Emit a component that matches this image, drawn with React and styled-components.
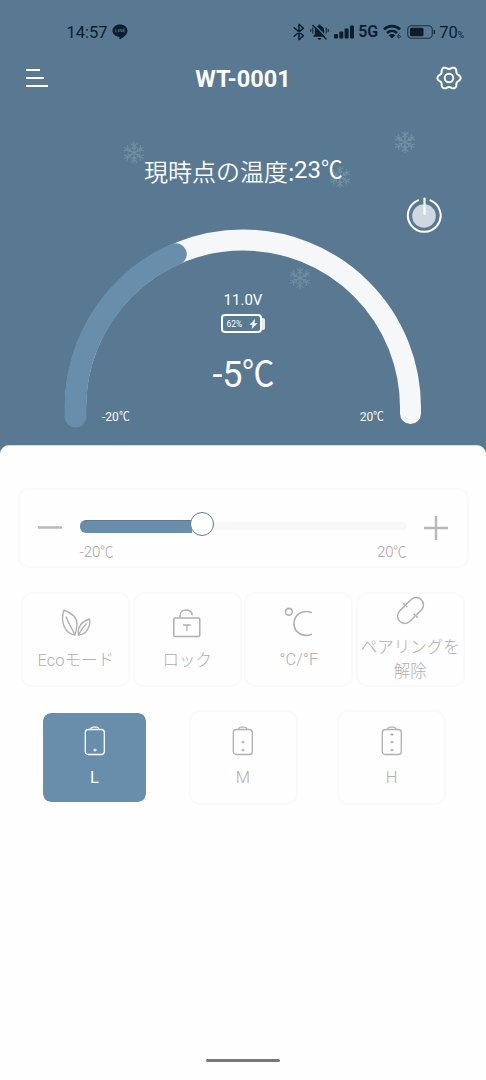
import React from "react";
import styled, { createGlobalStyle } from "styled-components";

const GlobalStyle = createGlobalStyle`
  * { box-sizing: border-box; }
  body {
    margin: 0;
    background: #fefefe;
    font-family: Roboto, "Noto Sans CJK JP", sans-serif;
  }
`;

const Screen = styled.main`
  width: 486px;
  height: 1080px;
  display: flex;
  flex-direction: column;
  overflow: hidden;
  background: #587991;
`;

const Hero = styled.section`
  position: relative;
  height: 445px;
  flex: none;
  display: flex;
  flex-direction: column;
  color: #fbfdff;
`;

const StatusBar = styled.div`
  height: 56px;
  padding: 8px 22px 0 66.5px;
  display: flex;
  align-items: center;
  justify-content: space-between;
  color: #0d1d2a;
`;

const StatusGroup = styled.div`
  display: flex;
  align-items: center;
  gap: ${(p) => p.$gap || 4}px;
  font-size: 16.5px;
  line-height: 20px;

  svg { display: block; }
`;

const Clock = styled.span`
  padding-top: 1px;
`;

const Network = styled.span`
  font-size: 16px;
  font-weight: 600;
  margin: 0 0 0 -1px;
`;

const Percent = styled.span`
  display: flex;
  align-items: baseline;
  padding-top: 3px;
  margin-left: -2px;
  small { font-size: 8.5px; }
`;

const TitleBar = styled.header`
  height: 44px;
  padding: 0 23px 0 25px;
  display: grid;
  grid-template-columns: 28px 1fr 28px;
  align-items: center;

  svg { display: block; }
`;

const Title = styled.h1`
  margin: 1px 2px 0 0;
  text-align: center;
  font-size: 23.5px;
  font-weight: 700;
  line-height: 28px;
`;

const Current = styled.div`
  height: 99px;
  padding: 54px 0 0 144px;
  display: flex;
  font-size: 24px;
  line-height: 34px;
  white-space: nowrap;
`;

const CurrentLabel = styled.span`
  font-family: "Noto Sans CJK JP", sans-serif;
  width: 150px;
  font-weight: 350;
`;

const CurrentValue = styled.span`
  margin-top: -1px;
`;

/* Condensed degree sign that sits tight against the digits. */
const Unit = styled.span`
  display: inline-block;
  transform: scaleX(0.9);
  transform-origin: left;
  margin-right: -0.09em;
  margin-left: -0.02em;
`;

const Flake = styled.svg`
  position: absolute;
  left: ${(p) => p.$x}px;
  top: ${(p) => p.$y}px;
  width: 24px;
  height: 24px;
  opacity: ${(p) => p.$fade};
`;

const PowerButton = styled.button`
  position: absolute;
  left: 405px;
  top: 196px;
  width: 38px;
  height: 40px;
  border: 0;
  padding: 0;
  background: none;
`;

const Gauge = styled.div`
  margin-top: 20px;
  height: 220px;
  display: grid;

  > * { grid-area: 1 / 1; }
`;

const Reading = styled.div`
  display: flex;
  flex-direction: column;
  align-items: center;
  padding-top: 71px;
`;

const Voltage = styled.div`
  font-size: 15px;
  line-height: 20px;
`;

const Battery = styled.div`
  display: flex;
  align-items: center;
  margin-top: 4px;
  margin-right: 1px;
`;

const BatteryBody = styled.div`
  width: 41px;
  height: 19px;
  border: 2px solid #fbfdff;
  border-radius: 4px;
  display: flex;
  align-items: center;
  justify-content: space-between;
  padding: 0 2px 0 4px;
  font-size: 8.5px;
  line-height: 12px;
`;

const BatteryCap = styled.div`
  width: 3px;
  height: 12px;
  background: #e4ecf2;
  border-radius: 0 2px 2px 0;
`;

const Target = styled.div`
  margin-top: 20px;
  padding-left: 1px;
  font-size: 36px;
  line-height: 44px;
`;

const GaugeEnds = styled.div`
  align-self: end;
  display: flex;
  justify-content: space-between;
  padding: 0 102px 14px 102px;
  font-size: 12px;
  line-height: 16px;
`;

const Sheet = styled.section`
  flex: 1;
  display: flex;
  flex-direction: column;
  align-items: center;
  background: #fefefe;
  border-top: 1px solid #d3dce3;
  border-radius: 9px 9px 0 0;
  color: #b7b7b7;
`;

const SliderCard = styled.div`
  margin-top: 42px;
  width: 451px;
  height: 80px;
  border: 2.5px solid #fafafa;
  border-radius: 10px;
  padding: 0 17px 0 17px;
  display: grid;
  grid-template-columns: 26px 328px 26px;
  justify-content: space-between;
`;

const StepButton = styled.button`
  border: 0;
  padding: 0;
  height: 26px;
  margin-top: 23.5px;
  background: none;

  svg { display: block; }
`;

const SliderColumn = styled.div`
  padding: 22px 0 0 0.5px;
`;

const Slider = styled.div`
  height: 24px;
  display: flex;
  align-items: center;
`;

const Filled = styled.div`
  width: 112px;
  height: 13px;
  margin: 5px 0 0 0;
  background: #688eac;
  border-top: 1px solid #5b7b94;
  border-radius: 6px 0 0 6px;
`;

const Thumb = styled.div`
  width: 24px;
  height: 24px;
  margin: 0 -1px 0 -1.5px;
  border: 1px solid #5b7b94;
  border-radius: 50%;
  background: #fff;
  z-index: 1;
`;

const Remaining = styled.div`
  flex: 1;
  height: 8px;
  margin-top: 3px;
  background: #f7f7f7;
  border-radius: 0 4px 4px 0;
`;

const Range = styled.div`
  margin-top: 6px;
  display: flex;
  justify-content: space-between;
  font-size: 15px;
  font-weight: 300;
  line-height: 20px;
  color: #a5a5a5;
`;

const CardRow = styled.div`
  display: flex;
  gap: ${(p) => p.$gap}px;
  margin-top: ${(p) => p.$top}px;
`;

const Card = styled.button`
  width: 109px;
  height: 95px;
  border: ${(p) => (p.$active ? "3px solid #fefefe" : "2.5px solid #fafafa")};
  border-radius: 11px;
  padding: ${(p) => p.$pad}px 0 0;
  display: flex;
  flex-direction: column;
  align-items: center;
  background: ${(p) => (p.$active ? "#688eac" : "#fefefe")};
  background-clip: padding-box;
  color: ${(p) => (p.$active ? "#fbfdff" : "#b0b0b0")};
  font-family: inherit;
  font-size: 16.5px;
  font-weight: ${(p) => (p.$active ? 400 : 300)};
  line-height: 24px;
  text-align: center;

  svg { display: block; flex: none; }
`;

const CardLabel = styled.span`
  margin-top: ${(p) => p.$top}px;
  white-space: nowrap;
`;

const HomeBar = styled.div`
  width: 74px;
  height: 3px;
  margin: auto 0 18px;
  border-radius: 2px;
  background: #777;
`;

const flakes = [
  { x: 122, y: 141, fade: 0.16 },
  { x: 393, y: 130, fade: 0.18 },
  { x: 328, y: 165, fade: 0.16 },
  { x: 288, y: 266, fade: 0.15 },
];

function Snowflake({ x, y, fade }) {
  return (
    <Flake $x={x} $y={y} $fade={fade} viewBox="-12 -12 24 24" fill="none" stroke="#fff" strokeWidth="1.1">
      {[0, 60, 120, 180, 240, 300].map((a) => (
        <path key={a} transform={`rotate(${a})`} d="M0 0V-11M-3.3-9.6 0-6.6 3.3-9.6M-2.4-6 0-3.8 2.4-6" />
      ))}
    </Flake>
  );
}

const line = { fill: "none", stroke: "currentColor", strokeLinecap: "round", strokeLinejoin: "round" };

const ChatIcon = () => (
  <svg width="16" height="16" viewBox="0 0 16 16">
    <path d="M8 .5C3.800.5.5 3.200.5 6.700c0 3.100 2.700 5.600 6.300 6.100.7.100.8.600.6 1.700-.1.700.3.900 1 .5 3.400-1.900 7.100-4.700 7.100-8.300C15.500 3.200 12.200.5 8 .5Z" fill="currentColor" />
    <path d="M3.700 5v3h1.600M6.500 5v3M8 8V5l2 3V5M12.800 5h-1.500v3h1.500M11.300 6.500h1.400" fill="none" stroke="#587991" strokeWidth=".7" />
  </svg>
);

const BluetoothIcon = () => (
  <svg width="12" height="18" viewBox="0 0 12 18" {...line} strokeWidth="1.500">
    <path d="m1.200 4.800 9.200 8L6 16.800V1.200l4.400 4-9.200 8" />
  </svg>
);

const MutedIcon = () => (
  <svg width="19" height="18" viewBox="0 0 19 18">
    <path d="M9.500 1.500c.8 0 1.200.5 1.200 1.200 2.200.6 3.400 2.300 3.400 4.600v3.900l1.700 2v.6H3.200v-.6l1.700-2V7.300c0-2.300 1.200-4 3.400-4.600 0-.7.4-1.200 1.200-1.200ZM7.600 15h3.800c-.2 1.200-.9 1.800-1.900 1.800S7.800 16.200 7.600 15Z" fill="currentColor" />
    <path d="M2.800 4.500v6M.8 6v3M16.200 4.500v6M18.200 6v3" stroke="currentColor" />
    <path d="m4 1.200 14 14.500" stroke="#587991" strokeWidth="1.300" />
    <path d="m2.500 2 14 14.500" stroke="currentColor" strokeWidth="1.300" />
  </svg>
);

const SignalIcon = () => (
  <svg width="20" height="14" viewBox="0 0 20 14" fill="currentColor">
    <rect x="0" y="9" width="4" height="4.500" rx="1" />
    <rect x="5.300" y="6.500" width="4" height="7" rx="1" />
    <rect x="10.600" y="3.500" width="4" height="10" rx="1" />
    <rect x="16" y=".5" width="4" height="13" rx="1" />
  </svg>
);

const WifiIcon = () => (
  <svg width="19" height="16" viewBox="0 0 19 16">
    <g fill="none" stroke="currentColor" strokeWidth="2.700">
      <path d="M1 5.400c4.400-4.400 11.600-4.400 16 0" />
      <path d="M4 9c2.900-2.700 7.100-2.700 10 0" />
    </g>
    <path d="M5.800 11.200c1.900-1.700 4.500-1.700 6.400 0L9 14.500Z" fill="currentColor" />
    <path d="M16.500 9.500c-2 1.500-2.300 4.500-.5 4.500 1.900 0 1.900-2.500.2-2.500-.8 0-1.300.6-1.300 1.200" fill="none" stroke="currentColor" strokeWidth=".8" />
  </svg>
);

const PhoneBattery = () => (
  <svg width="29" height="14" viewBox="0 0 29 14">
    <rect x=".7" y=".7" width="24.600" height="12.600" rx="4" fill="none" stroke="currentColor" strokeWidth="1.100" opacity=".8" />
    <rect x="3" y="2.800" width="13.500" height="8.400" rx="1.500" fill="currentColor" />
    <path d="M27.300 5v4" stroke="currentColor" strokeWidth="1.200" />
  </svg>
);

const MenuIcon = () => (
  <svg width="24" height="20" viewBox="0 0 24 20" fill="none" stroke="#fff" strokeWidth="2">
    <path d="M1 2h14M1 10h18M1 18h22" />
  </svg>
);

/* Six-lobed gear outline, traced in polar coordinates around (14, 13). */
const gearOutline =
  "M" +
  Array.from({ length: 90 }, (_, i) => {
    const t = (i / 90) * Math.PI * 2;
    const r = 10.3 + 1.3 * Math.cos(6 * t);
    return `${(14 + r * Math.cos(t)).toFixed(2)} ${(13 + r * Math.sin(t)).toFixed(2)}`;
  }).join("L") +
  "Z";

const GearIcon = () => (
  <svg width="28" height="26" viewBox="0 0 28 26" {...line} strokeWidth="2">
    <path d={gearOutline} />
    <circle cx="14" cy="13" r="4.300" />
  </svg>
);

const PowerIcon = () => (
  <svg width="38" height="40" viewBox="0 0 38 40" fill="none">
    <circle cx="19" cy="20" r="11.800" fill="#cfd8e1" />
    <path d="M13 4.300a16.400 16.400 0 1 0 12.500 0" stroke="#fff" strokeWidth="2" strokeLinecap="round" />
    <path d="M19.500 2.500v15.500" stroke="#fff" strokeWidth="2.200" strokeLinecap="round" />
  </svg>
);

const GaugeArc = () => (
  <svg width="486" height="220" viewBox="0 219 486 220" fill="none" strokeLinecap="round" strokeWidth="21">
    <path d="M75.500 413.500V407.500A167.500 167.500 0 0 1 410.500 407.500V413.500" stroke="#f6f7f8" />
    <path d="M75.500 416.500V407.500A167.500 167.500 0 0 1 175.900 254.030" stroke="#688eac" strokeWidth="21.700" />
  </svg>
);

const BoltIcon = () => (
  <svg width="9" height="10" viewBox="0 0 9 10" fill="currentColor">
    <path d="M6 0 .5 5.700h3L2.600 10 8.500 4.200h-3Z" />
  </svg>
);

const LeafIcon = () => (
  <svg width="30" height="28" viewBox="0 0 30 28" {...line} strokeWidth="1.400">
    <path d="M3 1C9.500 3.500 16.500 8 16 16c-.2 4-1 7-2.200 10C5 25-1.500 14 3 1Z" />
    <path d="M5.200 8c1.800 6 4.800 9.500 8.500 17.500" />
    <path d="M28.500 10c1.500 8-3.500 15.500-11 16-1.500-8 3.500-14 11-16Z" />
    <path d="M25.200 15c-3.200 3-5.500 6.500-7.500 10.500" />
  </svg>
);

const LockIcon = () => (
  <svg width="30" height="30" viewBox="0 0 30 30" {...line} strokeWidth="1.500">
    <rect x="1.800" y="10" width="26" height="18.500" rx="1.200" />
    <path d="M8 9.500V7.800C8 4.500 10.500 2 14 2c3 0 5.500 1.600 6.200 4.500" />
    <path d="M11.500 17h6.800M14.900 17v5.500" strokeWidth="1.300" />
  </svg>
);

const CelsiusIcon = () => (
  <svg width="30" height="30" viewBox="0 0 30 30" {...line} strokeWidth="1.600">
    <circle cx="4.900" cy="4.800" r="3.400" />
    <path d="M27.300 5.400c-9-3-17.300 2.300-17.300 11.200s8.500 14 17.300 10.800" />
  </svg>
);

const LinkIcon = () => (
  <svg width="32" height="32" viewBox="-16.500 -16.500 32 32" {...line} strokeWidth="1.500">
    <g transform="rotate(-45)">
      <path d="M1.500-7.300H8A7.300 7.300 0 0 1 8 7.300H1.500M-1.500 7.300H-8A7.300 7.300 0 0 1-8-7.300H-1.500" />
      <path d="M0-9.500v4.200M0 5.300v4.200" />
    </g>
  </svg>
);

function LevelIcon({ level }) {
  return (
    <svg width="22" height="30" viewBox="0 0 22 30" {...line} strokeWidth="1.300">
      <rect x="1.300" y="3.500" width="19" height="25" rx="3" />
      <path d="M6.800 3.200c.2-1.500.8-2 2-2h4c1.200 0 1.800.5 2 2" />
      {[24, 16, 8.500].slice(0, level).map((y) => (
        <path key={y} d={`M9.700 ${y}h2.600M11 ${y - 1}v2`} strokeWidth="1.200" />
      ))}
    </svg>
  );
}

export default function App() {
  return (
    <>
      <GlobalStyle />
      <Screen>
        <Hero>
          <StatusBar>
            <StatusGroup $gap={4}>
              <Clock>14:57</Clock>
              <ChatIcon />
            </StatusGroup>
            <StatusGroup $gap={5}>
              <BluetoothIcon />
              <MutedIcon />
              <SignalIcon />
              <Network>5G</Network>
              <WifiIcon />
              <PhoneBattery />
              <Percent>70<small>%</small></Percent>
            </StatusGroup>
          </StatusBar>
          <TitleBar>
            <MenuIcon />
            <Title>WT-0001</Title>
            <GearIcon />
          </TitleBar>
          {flakes.map((f) => (
            <Snowflake key={f.x} {...f} />
          ))}
          <Current>
            <CurrentLabel>現時点の温度:</CurrentLabel>
            <CurrentValue>23<Unit>℃</Unit></CurrentValue>
          </Current>
          <PowerButton aria-label="power"><PowerIcon /></PowerButton>
          <Gauge>
            <GaugeArc />
            <Reading>
              <Voltage>11.0V</Voltage>
              <Battery>
                <BatteryBody>62%<BoltIcon /></BatteryBody>
                <BatteryCap />
              </Battery>
              <Target>-5<Unit>℃</Unit></Target>
            </Reading>
            <GaugeEnds>
              <span>-20<Unit>℃</Unit></span>
              <span>20<Unit>℃</Unit></span>
            </GaugeEnds>
          </Gauge>
        </Hero>
        <Sheet>
          <SliderCard>
            <StepButton aria-label="minus">
              <svg width="26" height="26" viewBox="0 0 26 26" stroke="#b9b9b9" strokeWidth="2.500"><path d="M1 13.500h24" /></svg>
            </StepButton>
            <SliderColumn>
              <Slider>
                <Filled />
                <Thumb />
                <Remaining />
              </Slider>
              <Range>
                <span>-20<Unit>℃</Unit></span>
                <span>20<Unit>℃</Unit></span>
              </Range>
            </SliderColumn>
            <StepButton aria-label="plus">
              <svg width="26" height="26" viewBox="0 0 26 26" stroke="#b9b9b9" strokeWidth="2.500"><path d="M0 14h24M12 2v24" /></svg>
            </StepButton>
          </SliderCard>
          <CardRow $gap={2.5} $top={23.5}>
            <Card $pad={15}><LeafIcon /><CardLabel $top={12}>Ecoモード</CardLabel></Card>
            <Card $pad={14}><LockIcon /><CardLabel $top={11}>ロック</CardLabel></Card>
            <Card $pad={13.5}><CelsiusIcon /><CardLabel $top={10.5}>°C/°F</CardLabel></Card>
            <Card $pad={0}><LinkIcon /><CardLabel $top={10}>ペアリングを<br />解除</CardLabel></Card>
          </CardRow>
          <CardRow $gap={39.5} $top={23.5}>
            <Card $active $pad={13}><LevelIcon level={1} /><CardLabel $top={10}>L</CardLabel></Card>
            <Card $pad={13.5}><LevelIcon level={2} /><CardLabel $top={10}>M</CardLabel></Card>
            <Card $pad={13.5}><LevelIcon level={3} /><CardLabel $top={10}>H</CardLabel></Card>
          </CardRow>
          <HomeBar />
        </Sheet>
      </Screen>
    </>
  );
}
